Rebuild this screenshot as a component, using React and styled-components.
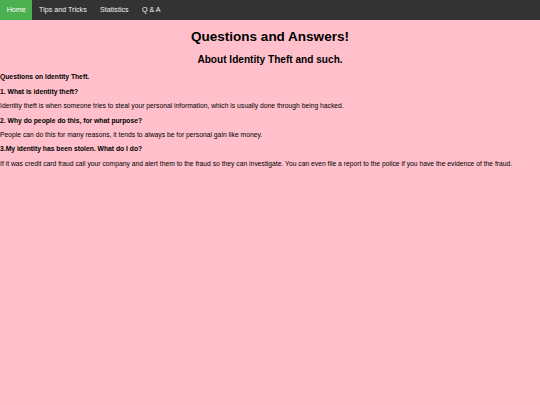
import React from "react";
import styled, { createGlobalStyle } from "styled-components";

const GlobalStyle = createGlobalStyle`
  body {
    margin: 0;
    background-color: pink;
    font-family: "Liberation Sans", Arial, sans-serif;
  }
`;

function App() {
  return (
    <>
      <GlobalStyle />
      <TopNav>
        <NavLink active>Home</NavLink>
        <NavLink>Tips and Tricks</NavLink>
        <NavLink>Statistics</NavLink>
        <NavLink>Q &amp; A</NavLink>
      </TopNav>

      <Title>Questions and Answers!</Title>
      <Subtitle>About Identity Theft and such.</Subtitle>

      <Text bold>Questions on Identity Theft.</Text>

      <Text bold>1. What is identity theft?</Text>
      <Text>
        Identity theft is when someone tries to steal your personal information,
        which is usually done through being hacked.
      </Text>

      <Text bold>2. Why do people do this, for what purpose?</Text>
      <Text>
        People can do this for many reasons, it tends to always be for personal
        gain like money.
      </Text>

      <Text bold>3.My identity has been stolen. What do I do?</Text>
      <Text>
        If it was credit card fraud call your company and alert them to the fraud
        so they can investigate. You can even file a report to the police if you
        have the evidence of the fraud.
      </Text>
    </>
  );
}

const TopNav = styled.nav`
  background-color: #333;
  overflow: hidden;
  display: flex;
  height: 20px;
`;

const NavLink = styled.a`
  display: flex;
  align-items: center;
  padding: 0 6.7px;
  font-size: 7.14px;
  text-decoration: none;
  cursor: pointer;
  color: ${(p) => (p.active ? "#fff" : "#f2f2f2")};
  background-color: ${(p) => (p.active ? "#4caf50" : "transparent")};

  &:hover {
    background-color: ${(p) => (p.active ? "#4caf50" : "#ddd")};
    color: ${(p) => (p.active ? "#fff" : "#000")};
  }
`;

const Title = styled.h1`
  text-align: center;
  font-size: 13.5px;
  line-height: 15.5px;
  margin: 9px 0;
`;

const Subtitle = styled.h2`
  text-align: center;
  font-size: 10.1px;
  line-height: 11.6px;
  margin: 9.6px 0 7.8px;
`;

const Text = styled.p`
  font-size: 6.75px;
  line-height: 7.8px;
  margin: 6.6px 0;
  font-weight: ${(p) => (p.bold ? "bold" : "normal")};
`;

export default App;
